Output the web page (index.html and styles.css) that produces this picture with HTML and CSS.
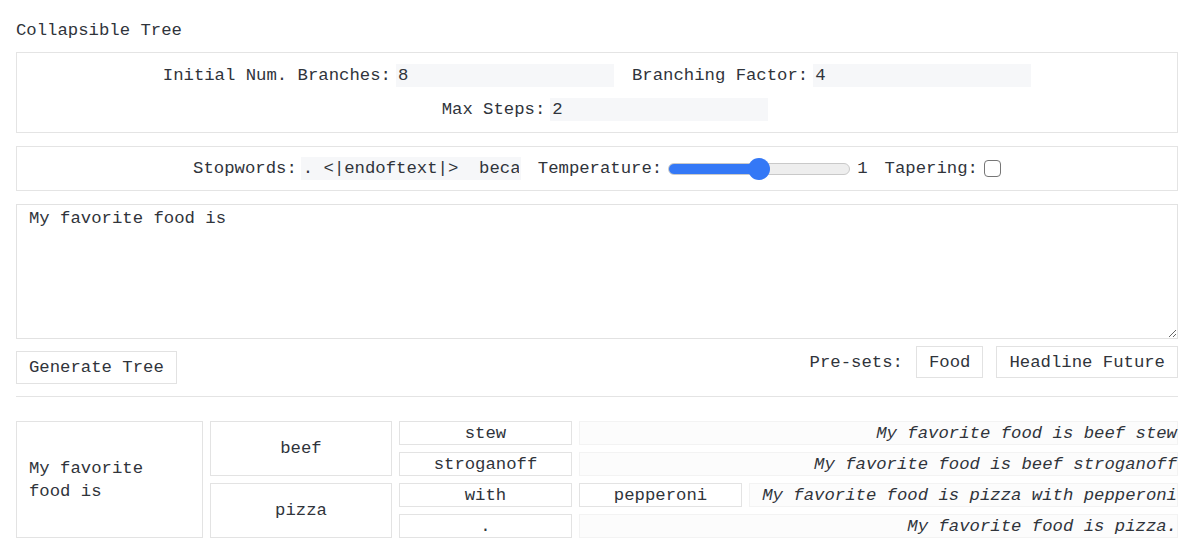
FILE: index.html
```html
<!DOCTYPE html>
<html lang="en">
<head>
    <meta charset="UTF-8">
    <title>Collapsible Tree</title>
    <link rel="stylesheet" href="styles.css">
</head>
<body>
    <div class="page">
        <div class="title">Collapsible Tree</div>

        <div class="panel">
            <label class="field">Initial Num. Branches:<input type="text" class="num" value="8"></label>
            <label class="field">Branching Factor:<input type="text" class="num" value="4"></label>
            <label class="field steps">Max Steps:<input type="text" class="num" value="2"></label>
        </div>

        <div class="panel">
            <label class="field">Stopwords:<input type="text" class="num" value=". <|endoftext|>  because"></label>
            <label class="field">Temperature:<input type="range" class="slider" min="0" max="2" step="0.1" value="1"><span class="val">1</span></label>
            <label class="field">Tapering:<input type="checkbox" class="check"></label>
        </div>

        <textarea class="prompt">My favorite food is</textarea>

        <div class="actions">
            <button class="btn gen">Generate Tree</button>
            <div class="presets">
                <span>Pre-sets:</span>
                <button class="btn">Food</button>
                <button class="btn">Headline Future</button>
            </div>
        </div>

        <hr class="rule">

        <div class="node">
            <div class="cell root">My favorite<br>food is</div>
            <div class="children">
                <div class="node">
                    <div class="cell d1">beef</div>
                    <div class="children">
                        <div class="node">
                            <div class="cell d2">stew</div>
                            <div class="sentence">My favorite food is beef stew</div>
                        </div>
                        <div class="node">
                            <div class="cell d2">stroganoff</div>
                            <div class="sentence">My favorite food is beef stroganoff</div>
                        </div>
                    </div>
                </div>
                <div class="node">
                    <div class="cell d1">pizza</div>
                    <div class="children">
                        <div class="node">
                            <div class="cell d2">with</div>
                            <div class="cell d3">pepperoni</div>
                            <div class="sentence">My favorite food is pizza with pepperoni</div>
                        </div>
                        <div class="node">
                            <div class="cell d2">.</div>
                            <div class="sentence">My favorite food is pizza.</div>
                        </div>
                    </div>
                </div>
            </div>
        </div>
    </div>
</body>
</html>
```

FILE: styles.css
```css
body {
    margin: 0;
    background: #fff;
    color: #30343b;
    font-family: "Liberation Mono", "DejaVu Sans Mono", monospace;
    font-size: 17.3px;
    line-height: 23px;
}
.page {
    width: 1162px;
    margin-left: 16px;
    padding-top: 19px;
}
.title {
    margin-bottom: 10px;
}
.panel {
    border: 1px solid #e4e4e4;
    padding: 11px 10px;
    display: flex;
    flex-wrap: wrap;
    justify-content: center;
    column-gap: 18px;
    row-gap: 11px;
    margin-bottom: 13px;
}
.panel + .panel {
    padding: 10px;
    column-gap: 17px;
}
.field {
    display: flex;
    align-items: center;
    height: 23px;
}
.steps {
    margin-left: 16px;
}
.num {
    width: 218px;
    height: 23px;
    box-sizing: border-box;
    margin: 0 0 0 5px;
    padding: 0 2px;
    border: none;
    background: #f6f7f9;
    font: inherit;
    color: inherit;
    outline: none;
}
.panel + .panel .num {
    width: 220px;
    margin-left: 4px;
}
.slider {
    -webkit-appearance: none;
    appearance: none;
    width: 182px;
    height: 12px;
    margin: 0 0 0 6px;
    border-radius: 6px;
    border: 1px solid #c9c9c9;
    box-sizing: border-box;
    background: linear-gradient(to right, #3478f6 0%, #3478f6 50%, #eeeeee 50%, #eeeeee 100%);
}
.slider::-webkit-slider-thumb {
    -webkit-appearance: none;
    width: 22px;
    height: 22px;
    border-radius: 50%;
    background: #3478f6;
    border: none;
}
.val {
    margin-left: 7px;
}
.check {
    -webkit-appearance: none;
    appearance: none;
    width: 17px;
    height: 17px;
    margin: 0 0 0 6px;
    border: 1px solid #767676;
    border-radius: 4px;
    background: #fff;
}
.prompt {
    display: block;
    width: 100%;
    height: 135px;
    box-sizing: border-box;
    border: 1px solid #e2e2e2;
    padding: 2px 12px;
    margin: 0 0 7px;
    font: inherit;
    color: inherit;
    resize: vertical;
}
.actions {
    display: flex;
    justify-content: space-between;
    align-items: flex-start;
}
.btn {
    font: inherit;
    color: inherit;
    background: #fff;
    border: 1px solid #e2e2e2;
    padding: 4px 12px;
    height: 33px;
    box-sizing: border-box;
}
.gen {
    margin-top: 5px;
}
.presets {
    display: flex;
    align-items: center;
    gap: 13px;
}
.presets .btn {
    height: 32px;
}
.rule {
    border: none;
    border-top: 1px solid #e4e4e4;
    margin: 12px 0 24px;
}
.node {
    display: flex;
    gap: 7px;
}
.children {
    display: flex;
    flex-direction: column;
    gap: 7px;
    flex: 1;
}
.cell {
    border: 1px solid #e3e3e3;
    box-sizing: border-box;
    display: flex;
    align-items: center;
    justify-content: center;
    min-height: 24px;
    flex: none;
}
.root {
    width: 187px;
    justify-content: flex-start;
    padding-left: 12px;
}
.d1 {
    width: 182px;
}
.d2 {
    width: 173px;
    height: 24px;
}
.d3 {
    width: 163px;
    height: 24px;
}
.sentence {
    flex: 1;
    height: 24px;
    box-sizing: border-box;
    border: 1px solid #f3f3f3;
    background: #fcfcfc;
    font-style: italic;
    text-align: right;
    padding-right: 0;
    line-height: 23px;
    white-space: nowrap;
}
```
